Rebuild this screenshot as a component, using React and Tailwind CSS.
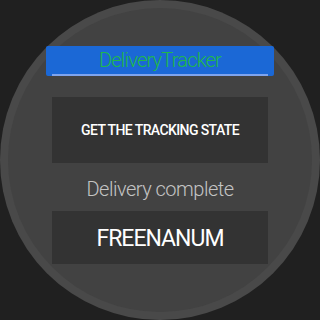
export default function App() {
  return (
    <div className="w-[320px] h-[320px] bg-[#202020] overflow-hidden" style={{ fontFamily: "Roboto, 'Noto Sans', sans-serif" }}>
      <div className="w-[320px] h-[320px] rounded-full bg-[#494949] flex items-center justify-center">
        <div className="w-[304px] h-[304px] rounded-full bg-[#424242] flex flex-col items-center">
          <div className="mt-[38px] w-[228px] h-[30px] bg-[#1b68d6] rounded-[2px] flex flex-col items-center">
            <div className="h-[28px] flex items-center text-[20px] font-light text-[#20b84a] tracking-[-0.8px]">
              DeliveryTracker
            </div>
            <div className="w-[216px] h-[2px] bg-[#7ea4ee]"></div>
          </div>
          <div className="mt-[21px] w-[216px] h-[66px] bg-[#333333] flex items-center justify-center text-[14px] font-medium text-white tracking-[-0.6px]">
            GET THE TRACKING STATE
          </div>
          <div className="mt-[14px] text-[20px] text-[#c4c4c4] leading-[24px] font-light tracking-[-0.5px]">
            Delivery complete
          </div>
          <div className="mt-[10px] w-[216px] h-[53px] pt-[3px] bg-[#333333] flex items-center justify-center text-[23px] text-white tracking-[-1px]">
            FREENANUM
          </div>
        </div>
      </div>
    </div>
  );
}
